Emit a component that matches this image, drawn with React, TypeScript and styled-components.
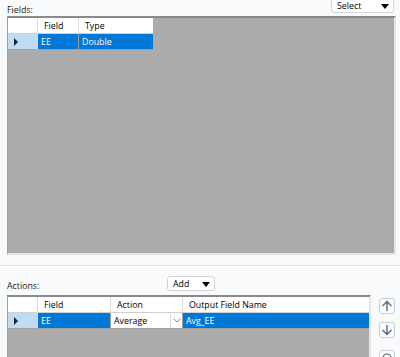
import React from "react";
import styled, { createGlobalStyle } from "styled-components";

const Global = createGlobalStyle`
  html, body { margin: 0; padding: 0; background: #f9fafc; }
  body { font-family: "Open Sans", "Noto Sans", "Liberation Sans", sans-serif; font-size: 9px; color: #000; }
`;

const FONT = "8.8px";

const Page = styled.div`
  width: 400px;
  height: 357px;
  overflow: hidden;
  display: flex;
  flex-direction: column;
  & > * { flex-shrink: 0; }
`;

const SectionHead = styled.div<{ $h: number }>`
  height: ${(p) => p.$h}px;
  display: flex;
  align-items: flex-end;
  justify-content: space-between;
  padding: 0 6px 0 7px;
`;

const Label = styled.span`
  font-size: ${FONT};
  line-height: 11px;
  color: #1a1a1a;
`;

const Drop = styled.div<{ $w: number; $h: number; $mt: number }>`
  box-sizing: border-box;
  width: ${(p) => p.$w}px;
  height: ${(p) => p.$h}px;
  margin-top: ${(p) => p.$mt}px;
  align-self: flex-start;
  background: #fff;
  border: 1px solid #d0d3d8;
  border-radius: 3px;
  display: flex;
  align-items: flex-end;
  justify-content: space-between;
  padding: 0 4px 1px 5px;
  font-size: ${FONT};
  line-height: 9px;
`;

const Arrow = styled.span`
  width: 0;
  height: 0;
  border-left: 4.5px solid transparent;
  border-right: 4.5px solid transparent;
  border-top: 5px solid #000;
  margin-bottom: 2px;
`;

const Grid = styled.div<{ $h: number; $mr: number }>`
  box-sizing: border-box;
  height: ${(p) => p.$h}px;
  margin: 0 ${(p) => p.$mr}px 0 7px;
  background: #ababab;
  border-top: 2px solid #8a8a8a;
  border-left: 1px solid #a0a0a0;
  border-right: 2px solid #e6e6e6;
  border-bottom: 2px solid #e6e6e6;
  overflow: hidden;
`;

const Row = styled.div<{ $cols: string }>`
  display: grid;
  grid-template-columns: ${(p) => p.$cols};
  height: 16px;
`;

const Cell = styled.div<{ $kind: "head" | "sel" | "rowhead" | "rowheadsel" | "edit" }>`
  box-sizing: border-box;
  height: 16px;
  display: flex;
  align-items: center;
  padding-left: ${(p) => (p.$kind === "head" ? 6 : 3)}px;
  font-size: ${FONT};
  white-space: nowrap;
  overflow: hidden;
  border-right: 1px solid ${(p) => (p.$kind === "sel" || p.$kind === "edit" ? "#a0a0a0" : "#dcdcdc")};
  border-bottom: 1px solid ${(p) => (p.$kind === "head" ? "#d0d0d0" : "#a0a0a0")};
  background: ${(p) =>
    p.$kind === "sel" ? "#0078d7" : p.$kind === "rowheadsel" ? "#bfdcf3" : "#fff"};
  color: ${(p) => (p.$kind === "sel" ? "#fff" : "#000")};
  justify-content: ${(p) => (p.$kind === "edit" ? "space-between" : "flex-start")};
  &:last-child { border-right: none; }
`;

const RowMark = styled.span`
  width: 0;
  height: 0;
  border-top: 4px solid transparent;
  border-bottom: 4px solid transparent;
  border-left: 4px solid #222;
  margin-left: 3px;
`;

const Chevron = styled.span`
  width: 11px;
  height: 14px;
  border-left: 1px solid #d8d8d8;
  display: flex;
  align-items: center;
  justify-content: center;
`;

const Gap = styled.div<{ $h: number }>`
  height: ${(p) => p.$h}px;
`;

const Separator = styled.div`
  height: 1px;
  background: #dde0e4;
`;

const ActionsBody = styled.div`
  display: flex;
  align-items: flex-start;
`;

const SideButtons = styled.div`
  display: flex;
  flex-direction: column;
  gap: 8px;
  padding-top: 3px;
  margin-left: 8px;
`;

const IconBtn = styled.div<{ $mt?: number }>`
  box-sizing: border-box;
  width: 16px;
  height: 16px;
  margin-top: ${(p) => p.$mt ?? 0}px;
  border: 1px solid #c9ccd2;
  border-radius: 3px;
  background: #fafbfc;
  display: flex;
  align-items: center;
  justify-content: center;
  color: #5a6a85;
`;

const AddHead = styled.div`
  height: 29px;
  display: grid;
  grid-template-columns: 160px 48px;
  padding-left: 7px;
  padding-bottom: 3px;
  align-items: end;
  box-sizing: border-box;
`;

export default function App() {
  const c1 = "30px 41px 74px";
  const c2 = "30px 73px 72px 1fr";
  return (
    <Page>
      <Global />
      <SectionHead $h={16}>
        <Label>Fields:</Label>
        <Drop $w={63} $h={20} $mt={-7}>
          <span>Select</span>
          <Arrow />
        </Drop>
      </SectionHead>
      <Grid $h={239} $mr={4}>
        <Row $cols={c1}>
          <Cell $kind="head" />
          <Cell $kind="head">Field</Cell>
          <Cell $kind="head">Type</Cell>
        </Row>
        <Row $cols={c1}>
          <Cell $kind="rowheadsel">
            <RowMark />
          </Cell>
          <Cell $kind="sel">EE</Cell>
          <Cell $kind="sel">Double</Cell>
        </Row>
      </Grid>
      <Gap $h={10} />
      <Separator />
      <AddHead>
        <Label>Actions:</Label>
        <Drop $w={48} $h={15} $mt={10}>
          <span>Add</span>
          <Arrow />
        </Drop>
      </AddHead>
      <ActionsBody>
        <Grid $h={70} $mr={0} style={{ width: 364 }}>
          <Row $cols={c2}>
            <Cell $kind="head" />
            <Cell $kind="head">Field</Cell>
            <Cell $kind="head">Action</Cell>
            <Cell $kind="head">Output Field Name</Cell>
          </Row>
          <Row $cols={c2}>
            <Cell $kind="rowheadsel">
              <RowMark />
            </Cell>
            <Cell $kind="sel">EE</Cell>
            <Cell $kind="edit">
              <span>Average</span>
              <Chevron>
                <svg width="8" height="5" viewBox="0 0 8 5">
                  <path d="M0.5 0.5 L4 4 L7.5 0.5" fill="none" stroke="#888" strokeWidth="1" />
                </svg>
              </Chevron>
            </Cell>
            <Cell $kind="sel">Avg_EE</Cell>
          </Row>
        </Grid>
        <SideButtons>
          <IconBtn>
            <svg width="12" height="12" viewBox="0 0 12 12">
              <path d="M6 11 V1.5 M1.5 6 L6 1.5 L10.5 6" fill="none" stroke="currentColor" strokeWidth="1.4" />
            </svg>
          </IconBtn>
          <IconBtn>
            <svg width="12" height="12" viewBox="0 0 12 12">
              <path d="M6 1 V10.5 M1.5 6 L6 10.5 L10.5 6" fill="none" stroke="currentColor" strokeWidth="1.4" />
            </svg>
          </IconBtn>
          <IconBtn $mt={4}>
            <svg width="12" height="12" viewBox="0 0 12 12">
              <circle cx="6" cy="6" r="4" fill="none" stroke="currentColor" strokeWidth="1.2" />
            </svg>
          </IconBtn>
        </SideButtons>
      </ActionsBody>
    </Page>
  );
}
